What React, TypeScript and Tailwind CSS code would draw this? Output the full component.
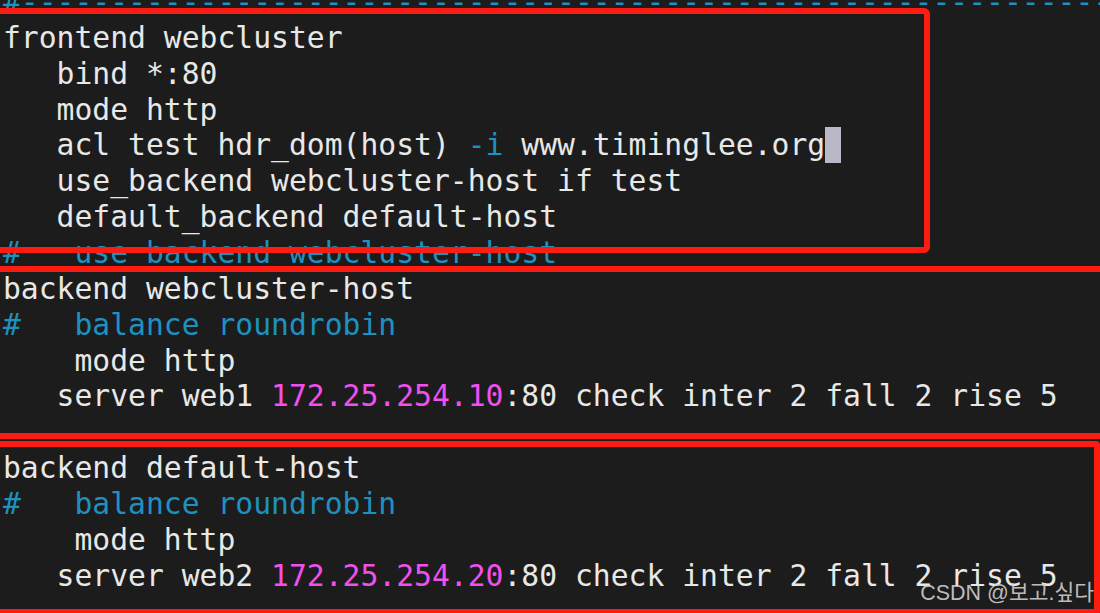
import React from "react";

type Seg = [string, string];

const W = "text-[#e8e8e8]";
const B = "text-[#1e91c0]";
const M = "text-[#f050ee]";

const lines: Seg[][] = [
  [["#" + "-".repeat(62), B]],
  [["frontend webcluster", W]],
  [["   bind *:80", W]],
  [["   mode http", W]],
  [
    ["   acl test hdr_dom(host) ", W],
    ["-i", B],
    [" www.timinglee.org", W],
  ],
  [["   use_backend webcluster-host if test", W]],
  [["   default_backend default-host", W]],
  [["#   use_backend webcluster-host", B]],
  [["backend webcluster-host", W]],
  [["#   balance roundrobin", B]],
  [["    mode http", W]],
  [
    ["   server web1 ", W],
    ["172.25.254.10", M],
    [":80 check inter 2 fall 2 rise 5", W],
  ],
  [["", W]],
  [["backend default-host", W]],
  [["#   balance roundrobin", B]],
  [["    mode http", W]],
  [
    ["   server web2 ", W],
    ["172.25.254.20", M],
    [":80 check inter 2 fall 2 rise 5", W],
  ],
];

export default function App() {
  return (
    <div className="relative w-[1100px] h-[613px] overflow-hidden bg-[#1c1c1c]">
      {/* terminal text */}
      <div
        className="-mt-4 pl-[3px] text-[29.7px] leading-[35.87px]"
        style={{ fontFamily: '"DejaVu Sans Mono", "Liberation Mono", monospace' }}
      >
        {lines.map((segs, i) => (
          <div key={i} className="whitespace-pre h-[35.87px]">
            {segs.map(([t, c], j) => (
              <span key={j} className={c}>
                {t}
              </span>
            ))}
            {i === 4 && (
              <span className="inline-block align-top w-[16px] h-[35.8px] bg-[#b8b8c6]" />
            )}
          </div>
        ))}
      </div>

      {/* red annotation boxes */}
      <div className="absolute left-[-12px] top-[8px] w-[942px] h-[245px] border-[6px] border-[#fc1c12] rounded-[6px]" />
      <div className="absolute left-[-12px] top-[266px] w-[1124px] h-[173px] border-[6px] border-[#fc1c12]" />
      <div className="absolute left-[-12px] top-[441px] w-[1112px] h-[174px] border-[6px] border-[#fc1c12] rounded-[4px]" />

      {/* watermark */}
      <div
        className="absolute right-[6px] bottom-[9px] text-[21.5px] leading-none text-[#d2d2d2]/90"
        style={{ fontFamily: '"Liberation Sans", "Noto Sans CJK KR", sans-serif' }}
      >
        CSDN @보고.싶다
      </div>
    </div>
  );
}
